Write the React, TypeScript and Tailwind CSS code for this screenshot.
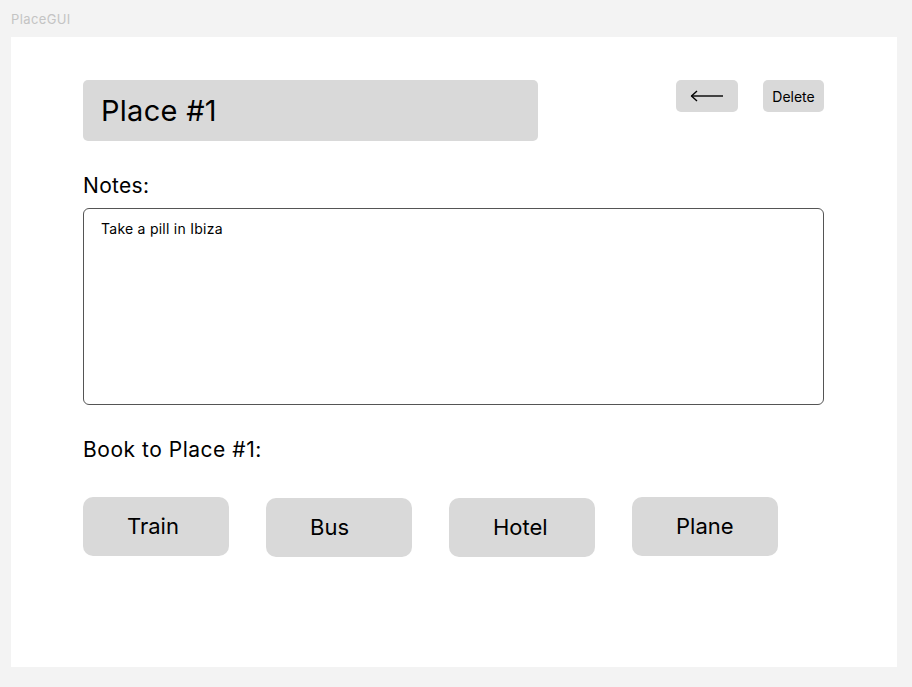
import { useState } from "react";

const bookings = [
  { label: "Train", shift: "mt-0" },
  { label: "Bus", shift: "mt-[1px]" },
  { label: "Hotel", shift: "mt-[1px]" },
  { label: "Plane", shift: "mt-0" },
];

export default function App() {
  const [notes, setNotes] = useState("Take a pill in Ibiza");

  return (
    <div className="h-[687px] w-[912px] bg-[#f3f3f3] font-['Inter',sans-serif] text-black">
      <div className="h-[37px] pl-[11px] pt-[11px] text-[13px] leading-[17px] tracking-[0.03em] text-[#c4c4c4]">PlaceGUI</div>

      {/* ── FRAME ── */}
      <div className="mx-[11px] h-[630px] w-[886px] bg-white pl-[72px] pt-[43px]">
        <div className="flex w-[741px] items-start">
          <div className="flex h-[61px] w-[455px] items-center rounded-[5px] bg-[#d9d9d9] pl-[18px] text-[29px] leading-none tracking-[0.01em]">
            Place #1
          </div>
          <button className="ml-auto flex h-[32px] w-[62px] items-center justify-center rounded-[5px] bg-[#d9d9d9]">
            <svg width="34" height="12" viewBox="0 0 34 12" fill="none">
              <path d="M1.5 6H33" stroke="#000" strokeWidth="1.4" />
              <path d="M7 1L1.5 6L7 11" stroke="#000" strokeWidth="1.4" strokeLinejoin="round" />
            </svg>
          </button>
          <button className="ml-[25px] flex h-[32px] w-[61px] items-center justify-center rounded-[5px] bg-[#d9d9d9] text-[14px]">
            Delete
          </button>
        </div>

        <div className="mt-[32px] text-[21px] leading-[25px] tracking-[0.015em]">Notes:</div>
        <textarea
          value={notes}
          onChange={(e) => setNotes(e.target.value)}
          className="mt-[10px] block h-[197px] w-[741px] resize-none rounded-[6px] border border-[#555] px-[17px] py-[10px] text-[14px] leading-[20px] tracking-[0.018em] outline-none"
        />

        <div className="mt-[32px] text-[21px] leading-[25px] tracking-[0.025em]">Book to Place #1:</div>
        <div className="mt-[35px] flex items-start gap-[37px]">
          {bookings.map((b) => (
            <button
              key={b.label}
              className={`${b.shift} flex h-[59px] w-[146px] items-center justify-start rounded-[10px] bg-[#d9d9d9] pl-[44px] text-[22px]`}
            >
              {b.label}
            </button>
          ))}
        </div>
      </div>
    </div>
  );
}
